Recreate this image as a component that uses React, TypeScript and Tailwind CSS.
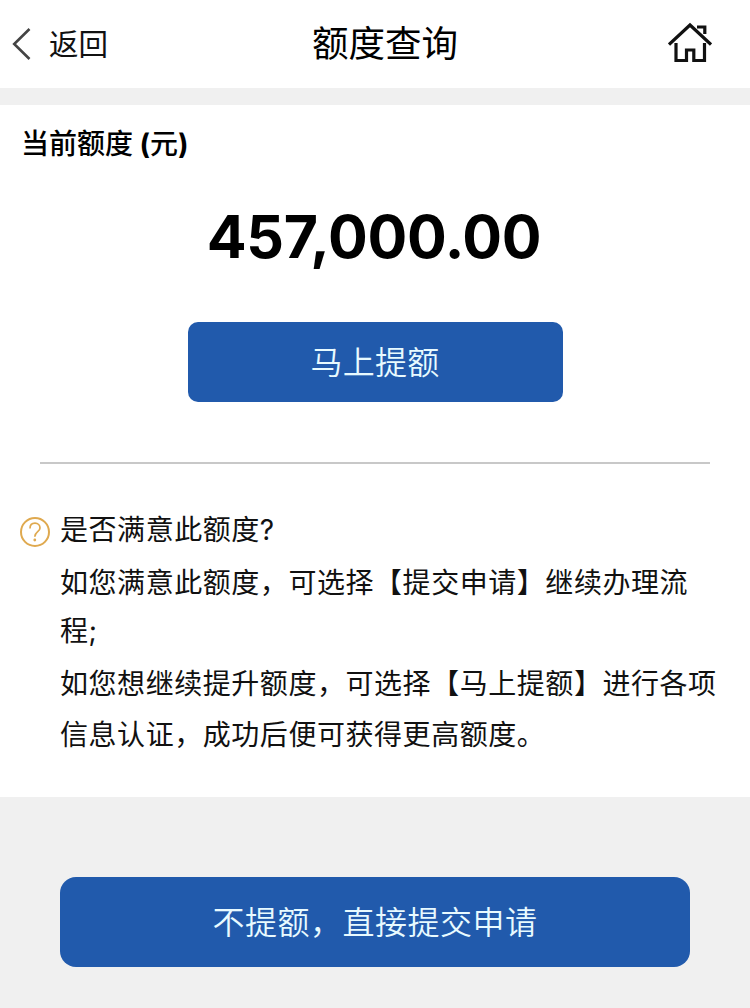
import React from "react";

const notes = [
  {
    text: "如您满意此额度，可选择【提交申请】继续办理流程;",
    style: "mt-[3px] leading-[48px]",
  },
  {
    text: "如您想继续提升额度，可选择【马上提额】进行各项信息认证，成功后便可获得更高额度。",
    style: "mt-1 leading-[51px]",
  },
];

function BackIcon() {
  return (
    <svg
      className="h-8 w-5"
      viewBox="0 0 20 32"
      fill="none"
      stroke="#444444"
      strokeWidth="2.6"
    >
      <path d="M18.5 1 L3.2 16 L18.5 31" />
    </svg>
  );
}

function HomeIcon() {
  return (
    <svg
      className="h-[42px] w-11"
      viewBox="0 0 44 42"
      fill="none"
      stroke="#111111"
      strokeWidth="3.2"
    >
      <path d="M1 22.5 L22 3 L43 22.5" />
      <path d="M29 5 H36.8 V12" />
      <path d="M8 21 V38.5 H18.5 V28 H25.8 V38.5 H36.5 V21" />
    </svg>
  );
}

function QuestionIcon() {
  return (
    <svg
      className="h-[30px] w-[30px]"
      viewBox="0 0 30 30"
      fill="none"
      stroke="#dfa94f"
    >
      <circle cx="15" cy="15" r="14" strokeWidth="2" />
      <path
        d="M10 11.4 C10 8.2 12 6.2 15 6.2 C18 6.2 20 8.2 20 10.9 C20 14.8 14.8 14.6 14.8 19.8"
        strokeWidth="1.7"
      />
      <circle cx="14.8" cy="23" r="1.4" fill="#dfa94f" stroke="none" />
    </svg>
  );
}

export default function App() {
  return (
    <div
      lang="zh-CN"
      className="flex h-[1008px] w-[750px] flex-col bg-white font-['Inter','Noto_Sans_CJK_SC',sans-serif] text-black [text-spacing-trim:space-all]"
    >
      <header className="grid h-[88px] grid-cols-[300px_148px_1fr] items-center pr-[38px] pl-[11px]">
        <button className="flex items-center gap-[18px] text-[29.5px] leading-10 text-[#111111]">
          <BackIcon />
          <span>返回</span>
        </button>
        <h1 className="text-center text-[36.5px] leading-10 whitespace-nowrap">
          额度查询
        </h1>
        <button className="justify-self-end pb-[2px]">
          <HomeIcon />
        </button>
      </header>
      <div className="h-[17px] bg-[#f0f0f0]" />

      <main className="flex h-[692px] flex-col">
        <h2 className="mt-[19px] pl-[21px] text-[28px] leading-10 font-medium">
          当前额度 <span className="-ml-px font-bold">(</span>元
          <span className="font-bold">)</span>
        </h2>
        <p className="mt-[37px] pr-[2px] text-center text-[59px] leading-[72px] font-bold tracking-[-0.3px]">
          457,000.00
        </p>
        <button className="mt-[49px] h-20 w-[375px] self-center rounded-[10px] bg-[#215aac] pt-px text-[32px] tracking-[0.3px] font-[350] text-[#e8faff]">
          马上提额
        </button>
        <div className="mx-10 mt-[60px] h-[2px] bg-[#c8c8c8]" />

        <section className="mt-[41px] flex gap-[10px] pl-5 text-[28px] tracking-[0.55px] text-[#111111]">
          <div className="mt-3 shrink-0">
            <QuestionIcon />
          </div>
          <div className="w-[660px]">
            <p className="leading-[51px]">是否满意此额度?</p>
            {notes.map((note) => (
              <p key={note.text} className={note.style}>
                {note.text}
              </p>
            ))}
          </div>
        </section>
      </main>

      <footer className="flex flex-1 justify-center bg-[#f0f0f0] pt-20">
        <button className="h-[90px] w-[630px] rounded-[16px] bg-[#215aac] pt-px text-[32px] font-[350] tracking-[0.5px] text-[#e8faff]">
          不提额，直接提交申请
        </button>
      </footer>
    </div>
  );
}
